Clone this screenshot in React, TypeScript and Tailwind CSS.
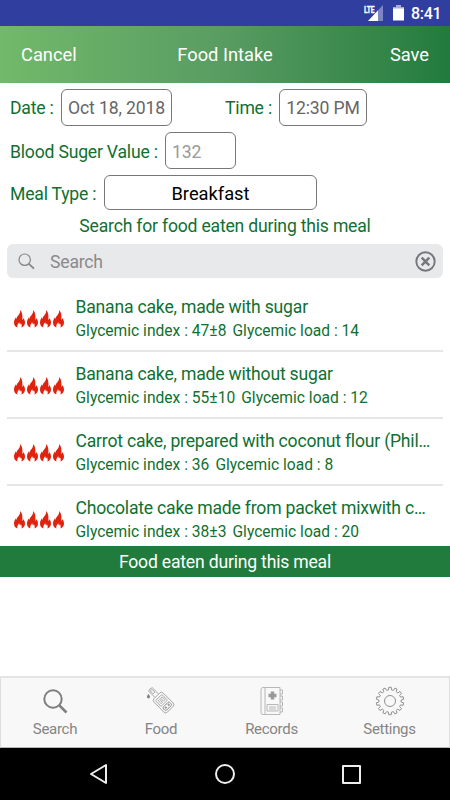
const foods = [
  { name: "Banana cake, made with sugar", index: "47±8", load: "14" },
  { name: "Banana cake, made without sugar", index: "55±10", load: "12" },
  { name: "Carrot cake, prepared with coconut flour (Phil…", index: "36", load: "8" },
  { name: "Chocolate cake made from packet mixwith c…", index: "38±3", load: "20" },
];

function gearPath(teeth: number, outer: number, inner: number) {
  const step = (Math.PI * 2) / teeth;
  const at = (r: number, a: number) =>
    `${(15 + r * Math.sin(a)).toFixed(2)} ${(15 - r * Math.cos(a)).toFixed(2)}`;
  const points: string[] = [];
  for (let i = 0; i < teeth; i++) {
    const a = i * step;
    points.push(at(inner, a - step * 0.3), at(outer, a - step * 0.2));
    points.push(at(outer, a + step * 0.2), at(inner, a + step * 0.3));
  }
  return `M${points.join("L")}Z`;
}

function StatusBar() {
  return (
    <div className="flex h-[26px] items-center justify-end bg-[#303f9f] pr-[10px] text-white">
      <svg className="mr-[9px] h-[18px] w-[20px]" viewBox="0 0 20 18">
        <path d="M19 1V17H4Z" fill="#7c86c4" />
        <path d="M14 6.5V17H4Z" fill="#fff" />
        <path d="M0 0H11V9.5H0Z" fill="#303f9f" />
        <text x="0" y="8.5" fill="#fff" stroke="#fff" strokeWidth=".3" fontSize="9.5" fontWeight="700" textLength="10.5" lengthAdjust="spacingAndGlyphs">
          LTE
        </text>
      </svg>
      <svg className="mr-[7px] h-4 w-[11px]" viewBox="0 0 11 16">
        <path d="M3 0H8V2H11V4H0V2H3Z" fill="#a5add8" />
        <path d="M0 3.500H11V15.500H0Z" fill="#fff" />
      </svg>
      <span className="w-[29px] pt-[2px] text-[16px] leading-none font-medium tracking-[-0.3px] whitespace-nowrap">8:41</span>
    </div>
  );
}

function Flames() {
  return (
    <div className="flex w-[61px] shrink-0 gap-[2px] pt-[25px]">
      {[0, 1, 2, 3].map((i) => (
        <svg key={i} className="h-[18px] w-[11px]" viewBox="0 0 11 18">
          <path
            d="M6.2 0C6.5 3.2 4.8 4.7 3.3 6.5C2.9 7 2.6 7.8 2.7 8.8C2.1 8.4 2 7.7 2 7.2C.8 8.7 0 10.5 0 12.5C0 15.3 1.2 16.8 3.4 17.6C2.9 15.3 3.8 14 5.3 12C5.1 13.4 5.7 13.9 6.4 14.4C6.7 13.9 6.7 13.4 6.6 12.9C7.8 14.3 8.1 16 7.3 17.6C9.8 16.8 11 15 11 12.6C11 10.8 10.3 9.3 9.2 8C9.2 8.9 9 9.5 8.3 9.9C8.7 6.2 8.5 2.5 6.2 0Z"
            fill="#e0230f"
          />
        </svg>
      ))}
    </div>
  );
}

function FoodRow({ name, index, load }: { name: string; index: string; load: string }) {
  return (
    <li className="mx-[7px] flex h-[67px] border-b-2 border-[#e6e6e6] pl-[7px]">
      <Flames />
      <div className="flex-1 pt-[10px] pl-[0.5px] whitespace-nowrap">
        <p className="text-[17.6px] leading-6 tracking-[-0.21px]">{name}</p>
        <p className="flex gap-[6px] text-[15.6px] leading-6 tracking-normal">
          <span>Glycemic index : {index}</span>
          <span>Glycemic load : {load}</span>
        </p>
      </div>
    </li>
  );
}

function SearchIcon() {
  return (
    <svg className="h-7 w-[28px]" viewBox="0 0 28 28" fill="none" stroke="#7f7f7f">
      <circle cx="12" cy="12" r="8.7" strokeWidth="2" />
      <path d="M18.3 18.3L25.5 25.5" strokeWidth="2.6" />
    </svg>
  );
}

function MeterIcon() {
  return (
    <svg className="h-7 w-[30px]" viewBox="0 0 30 28" fill="none" stroke="#a2a2a2" strokeWidth=".9">
      <path d="M2.4 7.5C1 9.5 1 11 2.5 11S4 9.5 2.4 7.5Z" fill="#808080" stroke="#808080" />
      <g transform="translate(16.500 14.500) rotate(-45)">
        <rect x="-6.500" y="-8" width="13" height="19" rx="2.500" />
        <rect x="-4.500" y="-5.500" width="9" height="8" rx="1" />
        <path d="M-2.500 -8V-17Q0 -18.500 2.500 -17V-8M-1.200 -12H1.200V-16H-1.200Z" />
        <path d="M-2.500 -3.500H-.5V.5H-2.500ZM1 -3.500H3V.5H1Z" />
        <rect x="-4.500" y="4.500" width="9" height="4.500" rx="1.500" stroke="#858585" />
        <circle cx="-2" cy="6.700" r=".7" stroke="#777" />
        <circle cx="2" cy="6.700" r=".7" stroke="#777" />
      </g>
    </svg>
  );
}

function RecordsIcon() {
  return (
    <svg className="h-7 w-6" viewBox="0 0 24 28" fill="none" stroke="#b0b0b0" strokeWidth=".9">
      <path d="M20 27.500H3Q1 27.500 1 25.500V2.500Q1 .5 3 .5H20ZM5 .5V27.500" />
      <path d="M20 3H22.500V7H20M20 9H22.500V13H20M20 15H22.500V19H20M20 21H22.500V25H20" />
      <path d="M10.800 4.500H14.200V6.800H16.500V10.200H14.200V12.500H10.800V10.200H8.500V6.800H10.800Z" fill="#999" stroke="none" />
      <path d="M7 17.500H18V24H7ZM9 20H16M9 22H16" />
    </svg>
  );
}

function GearIcon() {
  return (
    <svg className="h-[30px] w-[30px]" viewBox="0 0 30 30" fill="none" stroke="#909090" strokeWidth="1">
      <path d={gearPath(14, 13.8, 11.2)} strokeLinejoin="round" />
      <circle cx="15" cy="15" r="5.5" />
    </svg>
  );
}

const tabs = [
  { label: "Search", icon: <SearchIcon />, width: "w-[108px]" },
  { label: "Food", icon: <MeterIcon />, width: "w-[104px]" },
  { label: "Records", icon: <RecordsIcon />, width: "w-[117px]" },
  { label: "Settings", icon: <GearIcon />, width: "w-[119px]" },
];

function TabBar() {
  return (
    <nav className="flex h-[72px] border border-x-[#dedede] border-t-2 border-t-[#e4e4e4] border-b-[#b5b5b5] bg-[#f8f8f8] text-[#858585]">
      {tabs.map((tab) => (
        <div key={tab.label} className={`flex shrink-0 flex-col items-center pt-[8px] ${tab.width}`}>
          <div className="flex h-[30px] items-center justify-center">{tab.icon}</div>
          <span className="mt-[3px] text-[15px] leading-5 tracking-[-0.3px]">{tab.label}</span>
        </div>
      ))}
    </nav>
  );
}

function NavBar() {
  return (
    <div className="flex h-[52px] items-center bg-black pl-[88px]">
      <svg className="h-[22px] w-[20px]" viewBox="0 0 20 22" fill="none" stroke="#eee" strokeWidth="2">
        <path d="M18 2V20L3 11Z" strokeLinejoin="round" />
      </svg>
      <div className="ml-[107px] size-[20px] rounded-full border-2 border-[#eee]" />
      <div className="ml-[107px] size-[19px] rounded-[1px] border-2 border-[#eee]" />
    </div>
  );
}

export default function App() {
  return (
    <div className="flex h-[800px] w-[450px] flex-col overflow-hidden bg-white font-[Roboto,sans-serif] text-[17.6px] tracking-[-0.2px] text-[#0f7030]">
      <StatusBar />
      <header className="grid h-[57px] grid-cols-3 items-center bg-linear-to-r from-[#72b96a] via-[#589c62] to-[#217b3d] px-[21px] pt-px text-[18.3px] tracking-normal text-white">
        <span>Cancel</span>
        <span className="text-center">Food Intake</span>
        <span className="text-right">Save</span>
      </header>

      <div className="mt-[6px] flex h-[37px] items-center pl-[10px]">
        <span className="w-[51px] pt-[2px]">Date :</span>
        <div className="flex h-full w-[111px] items-center justify-center rounded-md border border-[#777] pt-[2px] tracking-[-0.15px] text-[#666]">
          Oct 18, 2018
        </div>
        <span className="ml-[53px] w-[54px] pt-[2px]">Time :</span>
        <div className="flex h-full w-[88px] items-center justify-center rounded-md border border-[#777] pt-[2px] tracking-[-0.15px] text-[#666]">
          12:30 PM
        </div>
      </div>
      <div className="mt-[6px] flex h-[37px] items-center pl-[10px]">
        <span className="w-[155px] pt-[3px]">Blood Suger Value :</span>
        <div className="flex h-full w-[71px] items-center rounded-md border border-[#777] pt-[3px] pl-[6px] text-[#9a9a9a]">
          132
        </div>
      </div>
      <div className="mt-[6px] flex h-[35px] items-center pl-[10px]">
        <span className="w-[94px] pt-[3px]">Meal Type :</span>
        <div className="flex h-full w-[213px] items-center justify-center rounded-md border border-[#777] pt-[3px] text-[18.3px] tracking-normal text-black">
          Breakfast
        </div>
      </div>
      <p className="mt-[4px] text-center leading-6">Search for food eaten during this meal</p>

      <div className="mx-[7px] mt-[6px] flex h-[34px] items-center rounded-md bg-[#e8e9eb] pr-[7px] pl-[11px] text-[#8a8a8c]">
        <svg className="h-[17px] w-[17px]" viewBox="0 0 17 17" fill="none" stroke="#858585">
          <circle cx="6.700" cy="6.700" r="5.700" strokeWidth="1.2" />
          <path d="M10.800 10.800L16 15.700" strokeWidth="1.800" />
        </svg>
        <span className="ml-[15px] flex-1 pt-[2px]">Search</span>
        <svg className="h-[21px] w-[21px]" viewBox="0 0 21 21" fill="none" stroke="#76777a">
          <circle cx="10.500" cy="10.500" r="9.200" strokeWidth="1.900" />
          <path d="M6.700 6.700L14.300 14.300M14.300 6.700L6.700 14.300" strokeWidth="2.500" />
        </svg>
      </div>

      <ul className="mt-[7px] h-[261px] overflow-hidden">
        {foods.map((food) => (
          <FoodRow key={food.name} {...food} />
        ))}
      </ul>
      <div className="flex h-[31px] items-center justify-center bg-[#217b3d] pt-[2px] text-white">
        Food eaten during this meal
      </div>
      <div className="flex-1" />
      <TabBar />
      <NavBar />
    </div>
  );
}
